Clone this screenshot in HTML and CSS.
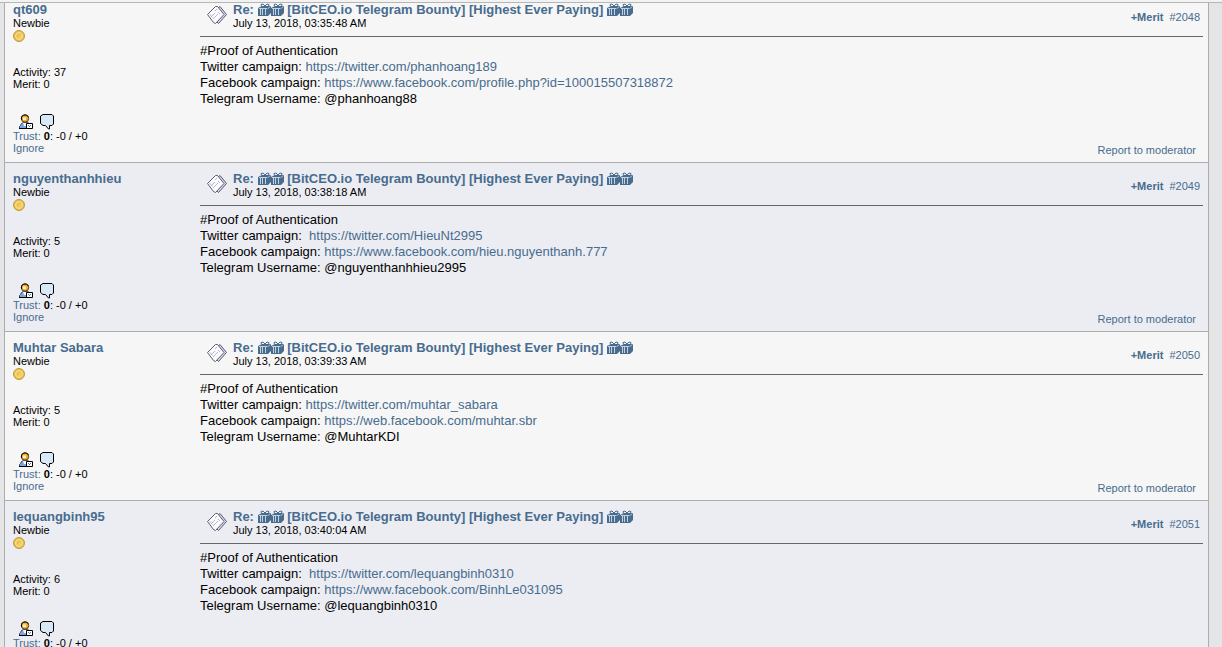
FILE: index.html
```html
<!DOCTYPE html>
<html lang="en">
<head>
    <meta charset="UTF-8">
    <meta name="viewport" content="width=device-width, initial-scale=1.0">
    <title>[BitCEO.io Telegram Bounty] [Highest Ever Paying]</title>
    <link rel="stylesheet" href="styles.css">
</head>
<body>
    <!-- Shared icons -->
    <svg class="sprite" aria-hidden="true">
        <symbol id="coin" viewBox="0 0 12 12">
            <circle cx="6" cy="6" r="5.500" fill="#e6bd50" stroke="#c39a3c"/>
            <circle cx="6" cy="6" r="3.500" fill="#f0cc62" stroke="#f8e08c"/>
            <path d="M4.500 7.500a2.300 2.300 0 0 1 3-3" fill="none" stroke="#e2b848"/>
        </symbol>
        <symbol id="profile" viewBox="0 0 16 16">
            <path d="M1.500 14.500v-2l1-1 1-2 2-1h4l2 1 1 2v3z" fill="#7fa6d8" stroke="#33476b"/>
            <path d="M1 14.500h8" stroke="#000"/>
            <path d="M5 9h4l-1 3H6z" fill="#f4f8ff"/>
            <circle cx="7" cy="4.500" r="3.700" fill="#f0b030" stroke="#5a3c10"/>
            <path d="M3.500 6V3l2-2h3l2 2" fill="none" stroke="#111"/>
            <path d="M5 3.500h3v2.500H5z" fill="#fff3cf"/>
            <path d="M8.500 9.500h6v5h-6z" fill="#fff" stroke="#000"/>
            <path d="M10 11h1v1h-1zM12 11h1v1h-1zM11 12h1v1h-1z" fill="#5578a8"/>
        </symbol>
        <symbol id="message" viewBox="0 0 16 16">
            <path d="M3 .500h9l1.500 1.500v8l-1.500 1.500h-2.500v3.500h-1l-3-3.500H3L.500 9.500V2z" fill="#d9e8f6" stroke="#000"/>
        </symbol>
        <symbol id="post-icon" viewBox="0 0 22 20">
            <path d="M10 5L14 1.500 20.500 9.500 12.500 18.500 9 15z" fill="#d2d8fa" stroke="#5c5c68"/>
            <path d="M1.500 9.500L9.500 1.500h2L18 9.500 9.500 18.500 7.500 17.500z" fill="#fafaff" stroke="#5c5c68"/>
            <path d="M3.500 9l3 3.500M5 12l4-4M7 14l5-5M9 6l2-2M12 7l2 2" fill="none" stroke="#b4b8c6"/>
        </symbol>
        <symbol id="gift" viewBox="0 0 13 13">
            <path d="M0 5L4 3h9v7l-3 3H0z" fill="#476c8e"/>
            <path d="M3.500 3.500L3 1.500 5 1l2 2 2-2 2 .500-.500 2" fill="none" stroke="#476c8e"/>
            <path d="M1 5.500h8.500M2.500 6v6M4.500 6v6M7.500 6v6" stroke="#c3d0dd"/>
            <path d="M10 5.500L12.500 3.500" stroke="#aebfce"/>
        </symbol>
    </svg>

    <div class="top-edge"></div>
    <div class="view">
        <main class="thread">
            <article class="post">
                <aside class="poster">
                    <a class="name" href="#">qt609</a>
                    <div>Newbie</div>
                    <svg class="coin"><use href="#coin"/></svg>
                    <div class="stats">Activity: 37<br>Merit: 0</div>
                    <div class="actions">
                        <a href="#" aria-label="View profile"><svg><use href="#profile"/></svg></a>
                        <a href="#" aria-label="Personal message"><svg><use href="#message"/></svg></a>
                    </div>
                    <div><a href="#">Trust:</a> <b>0</b>: -0 / +0</div>
                    <a href="#">Ignore</a>
                </aside>
                <section class="content">
                    <header class="post-head">
                        <svg class="post-icon"><use href="#post-icon"/></svg>
                        <div class="heading">
                            <a class="subject" href="#">Re: <svg class="gift"><use href="#gift"/></svg><svg class="gift"><use href="#gift"/></svg> [BitCEO.io Telegram Bounty] [Highest Ever Paying] <svg class="gift"><use href="#gift"/></svg><svg class="gift"><use href="#gift"/></svg></a>
                            <div>July 13, 2018, 03:35:48 AM</div>
                        </div>
                        <div class="links"><a class="merit" href="#">+Merit</a><a href="#">#2048</a></div>
                    </header>
                    <div class="message">
                        #Proof of Authentication<br>
                        Twitter campaign: <a href="#">https://twitter.com/phanhoang189</a><br>
                        Facebook campaign: <a href="#">https://www.facebook.com/profile.php?id=100015507318872</a><br>
                        Telegram Username: @phanhoang88
                    </div>
                    <a class="report" href="#">Report to moderator</a>
                </section>
            </article>

            <article class="post alt">
                <aside class="poster">
                    <a class="name" href="#">nguyenthanhhieu</a>
                    <div>Newbie</div>
                    <svg class="coin"><use href="#coin"/></svg>
                    <div class="stats">Activity: 5<br>Merit: 0</div>
                    <div class="actions">
                        <a href="#" aria-label="View profile"><svg><use href="#profile"/></svg></a>
                        <a href="#" aria-label="Personal message"><svg><use href="#message"/></svg></a>
                    </div>
                    <div><a href="#">Trust:</a> <b>0</b>: -0 / +0</div>
                    <a href="#">Ignore</a>
                </aside>
                <section class="content">
                    <header class="post-head">
                        <svg class="post-icon"><use href="#post-icon"/></svg>
                        <div class="heading">
                            <a class="subject" href="#">Re: <svg class="gift"><use href="#gift"/></svg><svg class="gift"><use href="#gift"/></svg> [BitCEO.io Telegram Bounty] [Highest Ever Paying] <svg class="gift"><use href="#gift"/></svg><svg class="gift"><use href="#gift"/></svg></a>
                            <div>July 13, 2018, 03:38:18 AM</div>
                        </div>
                        <div class="links"><a class="merit" href="#">+Merit</a><a href="#">#2049</a></div>
                    </header>
                    <div class="message">
                        #Proof of Authentication<br>
                        Twitter campaign:&nbsp; <a href="#">https://twitter.com/HieuNt2995</a><br>
                        Facebook campaign: <a href="#">https://www.facebook.com/hieu.nguyenthanh.777</a><br>
                        Telegram Username: @nguyenthanhhieu2995
                    </div>
                    <a class="report" href="#">Report to moderator</a>
                </section>
            </article>

            <article class="post">
                <aside class="poster">
                    <a class="name" href="#">Muhtar Sabara</a>
                    <div>Newbie</div>
                    <svg class="coin"><use href="#coin"/></svg>
                    <div class="stats">Activity: 5<br>Merit: 0</div>
                    <div class="actions">
                        <a href="#" aria-label="View profile"><svg><use href="#profile"/></svg></a>
                        <a href="#" aria-label="Personal message"><svg><use href="#message"/></svg></a>
                    </div>
                    <div><a href="#">Trust:</a> <b>0</b>: -0 / +0</div>
                    <a href="#">Ignore</a>
                </aside>
                <section class="content">
                    <header class="post-head">
                        <svg class="post-icon"><use href="#post-icon"/></svg>
                        <div class="heading">
                            <a class="subject" href="#">Re: <svg class="gift"><use href="#gift"/></svg><svg class="gift"><use href="#gift"/></svg> [BitCEO.io Telegram Bounty] [Highest Ever Paying] <svg class="gift"><use href="#gift"/></svg><svg class="gift"><use href="#gift"/></svg></a>
                            <div>July 13, 2018, 03:39:33 AM</div>
                        </div>
                        <div class="links"><a class="merit" href="#">+Merit</a><a href="#">#2050</a></div>
                    </header>
                    <div class="message">
                        #Proof of Authentication<br>
                        Twitter campaign: <a href="#">https://twitter.com/muhtar_sabara</a><br>
                        Facebook campaign: <a href="#">https://web.facebook.com/muhtar.sbr</a><br>
                        Telegram Username: @MuhtarKDI
                    </div>
                    <a class="report" href="#">Report to moderator</a>
                </section>
            </article>

            <article class="post alt">
                <aside class="poster">
                    <a class="name" href="#">lequangbinh95</a>
                    <div>Newbie</div>
                    <svg class="coin"><use href="#coin"/></svg>
                    <div class="stats">Activity: 6<br>Merit: 0</div>
                    <div class="actions">
                        <a href="#" aria-label="View profile"><svg><use href="#profile"/></svg></a>
                        <a href="#" aria-label="Personal message"><svg><use href="#message"/></svg></a>
                    </div>
                    <div><a href="#">Trust:</a> <b>0</b>: -0 / +0</div>
                </aside>
                <section class="content">
                    <header class="post-head">
                        <svg class="post-icon"><use href="#post-icon"/></svg>
                        <div class="heading">
                            <a class="subject" href="#">Re: <svg class="gift"><use href="#gift"/></svg><svg class="gift"><use href="#gift"/></svg> [BitCEO.io Telegram Bounty] [Highest Ever Paying] <svg class="gift"><use href="#gift"/></svg><svg class="gift"><use href="#gift"/></svg></a>
                            <div>July 13, 2018, 03:40:04 AM</div>
                        </div>
                        <div class="links"><a class="merit" href="#">+Merit</a><a href="#">#2051</a></div>
                    </header>
                    <div class="message">
                        #Proof of Authentication<br>
                        Twitter campaign:&nbsp; <a href="#">https://twitter.com/lequangbinh0310</a><br>
                        Facebook campaign: <a href="#">https://www.facebook.com/BinhLe031095</a><br>
                        Telegram Username: @lequangbinh0310
                    </div>
                </section>
            </article>
        </main>
    </div>
</body>
</html>
```
FILE: styles.css
```css
:root {
    --page: #e5e5e8;
    --post: #f6f6f6;
    --post-alt: #ecedf3;
    --border: #adadad;
    --link: #476c8e;
}

* {
    box-sizing: border-box;
}

body {
    margin: 0;
    height: 100vh;
    display: flex;
    flex-direction: column;
    overflow: hidden;
    background: var(--page);
    color: #000;
    font-family: "Liberation Sans", Arial, sans-serif;
    font-size: 11px;
    line-height: 12px;
}

a {
    color: var(--link);
    text-decoration: none;
}

a:hover {
    text-decoration: underline;
}

.sprite {
    display: none;
}

.top-edge {
    flex: none;
    height: 3px;
    background: #f2f2f2;
    border-bottom: 1px solid #b6b6b6;
}

.view {
    flex: 1;
    min-height: 0;
    overflow: hidden;
}

/* the thread is scrolled a little past the top of the first post */
.thread {
    margin: -9px 13px 0 4px;
    border: solid var(--border);
    border-width: 0 1px;
}

.post {
    display: grid;
    grid-template-columns: 187px 1fr;
    padding: 8px 5px 6px 8px;
    background: var(--post);
    border-bottom: 1px solid var(--border);
}

.post.alt {
    background: var(--post-alt);
}

.poster {
    padding-bottom: 2px;
}

.name,
.subject {
    display: block;
    font-size: 13px;
    line-height: 15px;
    font-weight: bold;
}

.gift {
    width: 13px;
    height: 13px;
    vertical-align: -2px;
}

.poster svg {
    display: block;
}

.coin {
    width: 12px;
    height: 12px;
    margin-top: 1px;
}

.stats {
    margin: 24px 0;
}

.actions {
    display: flex;
    gap: 6px;
    padding-left: 5px;
}

.actions svg {
    width: 16px;
    height: 16px;
}

.content {
    display: flex;
    flex-direction: column;
}

.post-head {
    display: flex;
    align-items: center;
    height: 35px;
    padding: 0 3px 8px 6px;
    border-bottom: 1px solid #666;
}

.post-icon {
    width: 22px;
    height: 20px;
    margin-right: 5px;
}

.links {
    display: flex;
    gap: 6px;
    margin-left: auto;
    padding-top: 4px;
}

.merit {
    font-weight: bold;
}

.message {
    padding-top: 6px;
    font-size: 13px;
    line-height: 16px;
}

.report {
    align-self: flex-end;
    margin: auto 7px 0 0;
}
```
